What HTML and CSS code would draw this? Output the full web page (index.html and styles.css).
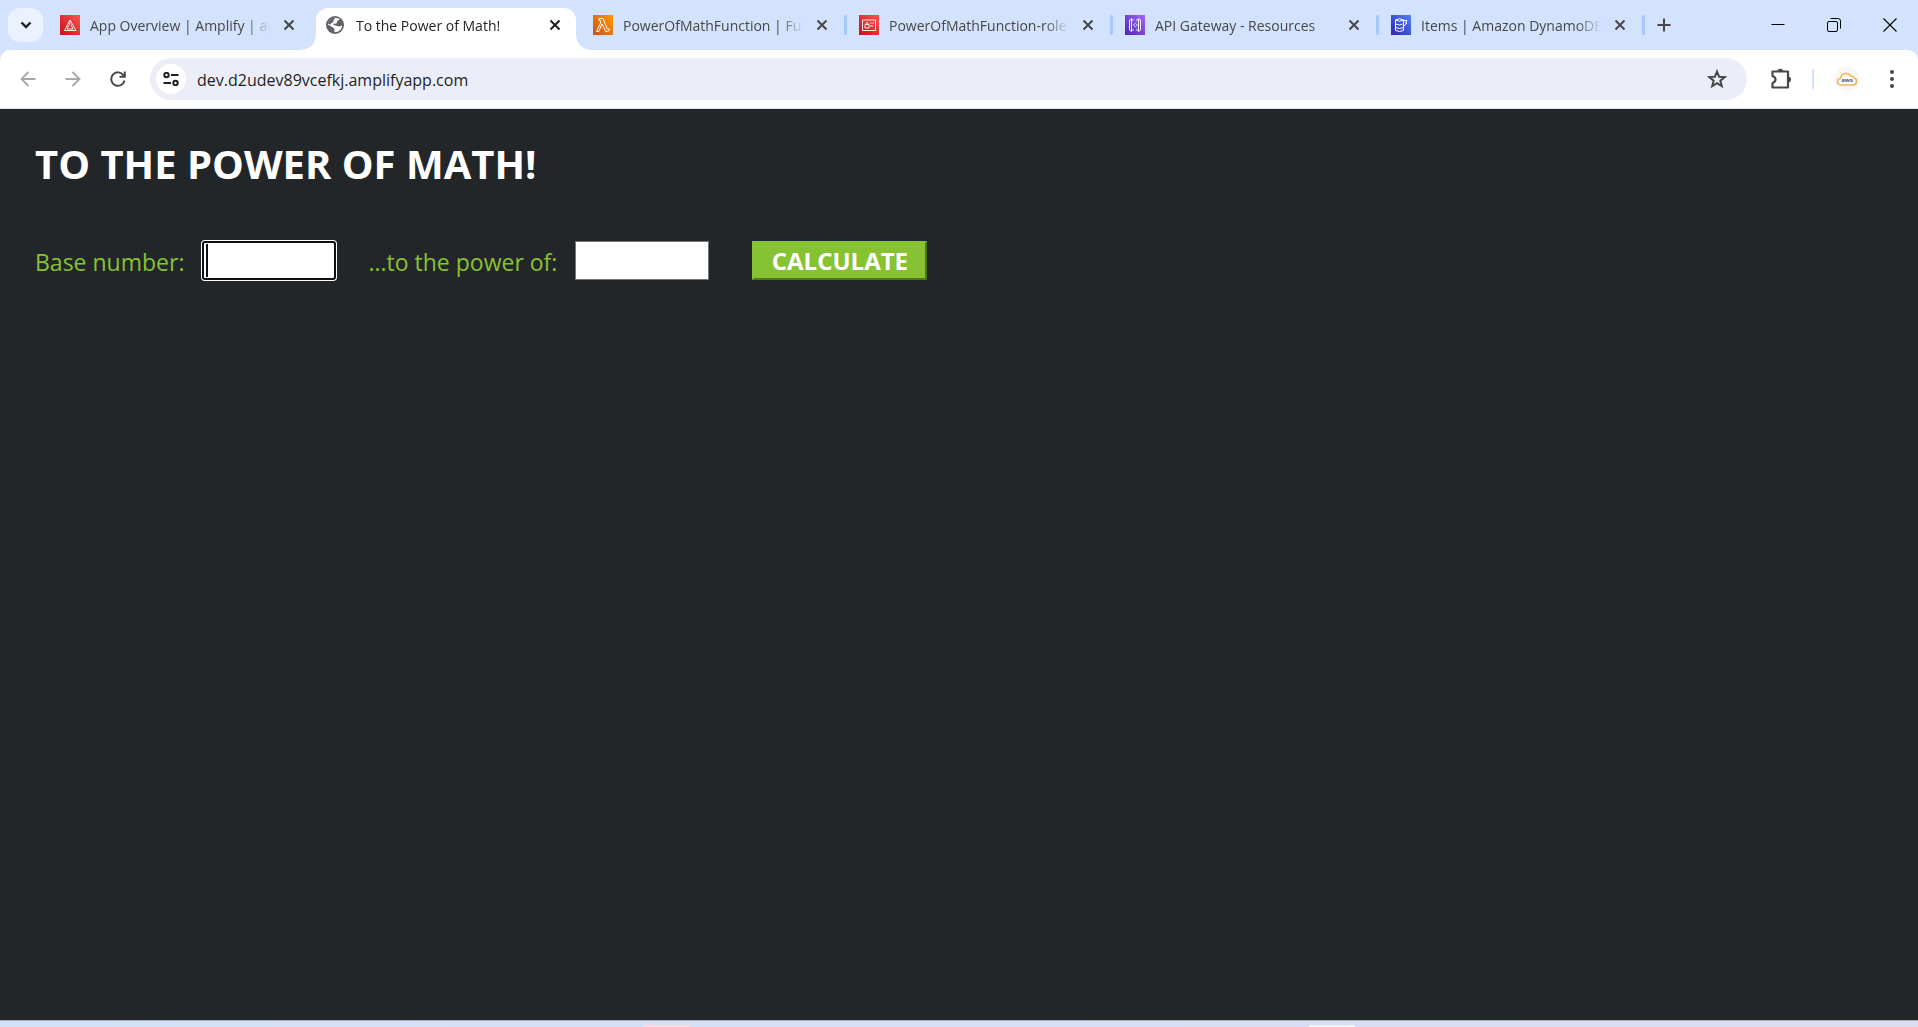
FILE: index.html
```html
<!DOCTYPE html>
<html lang="en">
<head>
<meta charset="utf-8">
<title>To the Power of Math!</title>
<link rel="stylesheet" href="styles.css">
</head>
<body>
<header class="browser">
  <div class="tabstrip">
    <button class="tab-search" aria-label="Search tabs"><svg width="12" height="8" viewBox="0 0 12 8"><path d="M1.500 1.500 6 6l4.500-4.500" fill="none" stroke="#1f1f1f" stroke-width="2.400"/></svg></button>
    <nav class="tabs">
      <div class="tab">
        <svg class="favicon" viewBox="0 0 20 20"><defs><linearGradient id="red" x1="0" y1="1" x2="1" y2="0"><stop stop-color="#c4101c"/><stop offset="1" stop-color="#ff5252"/></linearGradient></defs><rect width="20" height="20" fill="url(#red)"/><path d="M10 5 4.500 15.500H16zM10 8l-3 6h6l-2-4.500M10 5v3" fill="none" stroke="#fff" stroke-width=".9"/></svg>
        <a class="tab-title" href="#">App Overview | Amplify | app</a>
        <button class="tab-close" aria-label="Close tab"><svg width="12" height="12" viewBox="0 0 12 12"><path d="m1.500 1.500 9 9m0-9-9 9"/></svg></button>
      </div>
      <div class="tab tab-active">
        <svg class="favicon" viewBox="0 0 20 20"><circle cx="9" cy="10" r="9" fill="#5f6368"/><path d="M9 2.800c2 .2 4 .4 4.600 1.200-.3 1.500-1.800 1.500-2.600 2.300-.5.7.5 1.700-.6 2.200-.8.400-2.200-.2-3 .5-.4.600.3 1.200 1.200 1.300 1.800.1 2.600.8 3.600 1.100 1.300.2 2.400-.8 3.900-.7-.2 3.500-3.300 6.500-7.100 6.500l-.9-1.500c.6-1 .3-2.200-.8-2.900C5.500 12 3.600 10 1.900 9.800 2.200 5.500 5.500 3 9 2.800z" fill="#fff"/><path d="M9 2.800C5.500 3 2.500 5.500 1.900 8.600l2.400 1.200c.6-2 1.300-2.200 2.500-2.600 1-.4.200-2 1.400-2.700z" fill="#5f6368"/></svg>
        <a class="tab-title" href="#">To the Power of Math!</a>
        <button class="tab-close" aria-label="Close tab"><svg width="12" height="12" viewBox="0 0 12 12"><path d="m1.500 1.500 9 9m0-9-9 9"/></svg></button>
      </div>
      <div class="tab">
        <svg class="favicon" viewBox="0 0 20 20"><defs><linearGradient id="orange" x1="0" y1="1" x2="1" y2="0"><stop stop-color="#c8511b"/><stop offset="1" stop-color="#ff9900"/></linearGradient></defs><rect width="20" height="20" fill="url(#orange)"/><path d="M6 3.500h4L14.300 14l1.500-.5.700 2-3.700 1.200L9 9 5.800 16.500H3.500L8 7l-.6-1.500H6z" fill="none" stroke="#fff"/></svg>
        <a class="tab-title" href="#">PowerOfMathFunction | Functions</a>
        <button class="tab-close" aria-label="Close tab"><svg width="12" height="12" viewBox="0 0 12 12"><path d="m1.500 1.500 9 9m0-9-9 9"/></svg></button>
      </div>
      <div class="tab tab-divided">
        <svg class="favicon" viewBox="0 0 20 20"><rect width="20" height="20" fill="url(#red)"/><path d="M3.500 5h13v10.500h-13zM11 8h1.500m1 0H15m-4 3h3M6 9.500h4V13H6zm1-.5V8q1-1.500 2 0v1" fill="none" stroke="#fff" stroke-width=".9"/></svg>
        <a class="tab-title" href="#">PowerOfMathFunction-role-1</a>
        <button class="tab-close" aria-label="Close tab"><svg width="12" height="12" viewBox="0 0 12 12"><path d="m1.500 1.500 9 9m0-9-9 9"/></svg></button>
      </div>
      <div class="tab tab-divided">
        <svg class="favicon" viewBox="0 0 20 20"><defs><linearGradient id="purple" x1="0" y1="1" x2="1" y2="0"><stop stop-color="#4d27a8"/><stop offset="1" stop-color="#a166ff"/></linearGradient></defs><rect width="20" height="20" fill="url(#purple)"/><path d="m6.500 3.500-2 1.500v10l2 1.500zM13.500 3.500l2 1.500v10l-2 1.500zM6.500 5H9m-2.500 10H9m2-10h2.500M11 15h2.500M11 7.500 8.500 10l2.500 2.500M12 9v2" fill="none" stroke="#fff" stroke-width=".9"/></svg>
        <a class="tab-title" href="#">API Gateway - Resources</a>
        <button class="tab-close" aria-label="Close tab"><svg width="12" height="12" viewBox="0 0 12 12"><path d="m1.500 1.500 9 9m0-9-9 9"/></svg></button>
      </div>
      <div class="tab tab-divided">
        <svg class="favicon" viewBox="0 0 20 20"><defs><linearGradient id="blue" x1="0" y1="1" x2="1" y2="0"><stop stop-color="#2e27ad"/><stop offset="1" stop-color="#527fff"/></linearGradient></defs><rect width="20" height="20" fill="url(#blue)"/><path d="M4.500 5q4-2.500 8 0v10.500q-4 2-8 0zM4.500 5q4 2.500 8 0m-8 4q4 2 7 0m-7 3.500q4 2 8 0M13 5.500h3L14.500 8H16l-3.500 3.500" fill="none" stroke="#fff"/></svg>
        <a class="tab-title" href="#">Items | Amazon DynamoDB</a>
        <button class="tab-close" aria-label="Close tab"><svg width="12" height="12" viewBox="0 0 12 12"><path d="m1.500 1.500 9 9m0-9-9 9"/></svg></button>
      </div>
      <button class="new-tab" aria-label="New tab"><svg width="14" height="14" viewBox="0 0 14 14"><path d="M7 .5v13M.5 7h13" stroke="#474747" stroke-width="2"/></svg></button>
    </nav>
    <div class="window-controls">
      <button aria-label="Minimize"><svg width="14" height="14" viewBox="0 0 14 14"><path d="M.5 6.500h13" stroke="#000"/></svg></button>
      <button aria-label="Restore"><svg width="14" height="14" viewBox="0 0 14 14"><g fill="none" stroke="#000"><rect x=".5" y="3.500" width="10" height="10" rx="1.500"/><path d="M3.500.5h7.500q2.500 0 2.500 2.500v7.500"/></g></svg></button>
      <button aria-label="Close window"><svg width="14" height="14" viewBox="0 0 14 14"><path d="m.5.500 13 13m0-13-13 13" stroke="#000" stroke-width="1.100"/></svg></button>
    </div>
  </div>
  <div class="toolbar">
    <div class="nav-buttons">
      <button aria-label="Back"><svg width="16" height="16" viewBox="0 0 16 16"><path d="M15.500 8H2m6.500-7L1.500 8l7 7" fill="none" stroke="#a8a8a8" stroke-width="1.800"/></svg></button>
      <button aria-label="Forward"><svg width="16" height="16" viewBox="0 0 16 16"><path d="M.5 8H14M7.500 1l7 7-7 7" fill="none" stroke="#a8a8a8" stroke-width="1.800"/></svg></button>
      <button aria-label="Reload"><svg width="16" height="16" viewBox="0 0 16 16"><path d="M14.500 9.500A6.700 6.700 0 1 1 13.500 4.300L14.500 5.500M9.500 5.800h5.300V.5" fill="none" stroke="#474747" stroke-width="2"/></svg></button>
    </div>
    <div class="omnibox">
      <button class="site-info" aria-label="Site information"><svg width="16" height="14" viewBox="0 0 16 14"><g fill="none" stroke="#1f1f1f" stroke-width="2"><circle cx="3.500" cy="3" r="2.200"/><path d="M8 3h7.500M.5 11H8"/><circle cx="12.500" cy="11" r="2.200"/></g></svg></button>
      <input class="address" type="text" aria-label="Address" value="dev.d2udev89vcefkj.amplifyapp.com">
      <button class="bookmark" aria-label="Bookmark this page"><svg width="20" height="20" viewBox="0 0 20 20"><path d="m10 2.500 2.100 5.200 5.600.4-4.300 3.600 1.400 5.500-4.800-3-4.800 3 1.400-5.500-4.300-3.600 5.600-.4z" fill="none" stroke="#474747" stroke-width="2"/></svg></button>
    </div>
    <div class="tools">
      <button aria-label="Extensions"><svg width="22" height="22" viewBox="0 0 22 22"><path d="M2.500 3.500h15.500v16H2.500V15q3-1 3-3.500t-3-3.500z" fill="none" stroke="#474747" stroke-width="2.200" stroke-linejoin="round"/><path d="M7.500 3.500a2.800 2.800 0 0 1 5.600 0M18 8.500a3 3 0 0 1 0 6" fill="#474747"/></svg></button>
      <span class="tools-divider"></span>
      <button aria-label="Profile"><svg width="26" height="26" viewBox="0 0 26 26"><circle cx="13" cy="13" r="12.500" fill="#f7f7f7"/><path d="M7 19q-3.500-.5-3.500-3.500 0-2.500 3-3 .5-4.500 5-5 4-.3 5.500 3 2-1 3 1.500 2.500.5 2.500 3.500T19.500 19z" fill="#fff" stroke="#f6b25a" stroke-width="1.500"/><text x="13" y="16" class="avatar-text">aws</text></svg></button>
      <button class="menu" aria-label="Menu"><svg width="6" height="20" viewBox="0 0 6 20"><g fill="#474747"><circle cx="3" cy="3" r="2"/><circle cx="3" cy="10" r="2"/><circle cx="3" cy="17" r="2"/></g></svg></button>
    </div>
  </div>
</header>
<main class="page">
  <h1>TO THE POWER OF MATH!</h1>
  <form class="power-form">
    <div class="field">
      <label for="base">Base number:</label>
      <input class="number number-focused" id="base" type="text">
    </div>
    <div class="field">
      <label for="exponent">...to the power of:</label>
      <input class="number" id="exponent" type="text">
    </div>
    <button class="calculate" type="button">CALCULATE</button>
  </form>
</main>
<footer class="taskbar"><span class="task task-pink"></span><span class="task task-white"></span></footer>
</body>
</html>
```
FILE: styles.css
```css
* { box-sizing: border-box; }

body {
  margin: 0;
  min-height: 100vh;
  display: flex;
  flex-direction: column;
  overflow: hidden;
  font-family: "Open Sans", "Noto Sans", sans-serif;
  background: #232629;
}

button {
  padding: 0;
  border: 0;
  background: none;
  font: inherit;
  display: flex;
  align-items: center;
  justify-content: center;
}

svg { display: block; }

.browser { background: #d3e2fd; }

.tabstrip {
  height: 50px;
  display: flex;
  padding-left: 8px;
}

.tab-search {
  width: 35px;
  height: 34px;
  margin-top: 8px;
  border-radius: 12px;
  background: #ebf1fe;
}

.tabs {
  flex: 1;
  display: flex;
  min-width: 0;
  padding-left: 7px;
}

.tab {
  position: relative;
  flex: 0 1 260px;
  min-width: 0;
  height: 42px;
  margin: 8px 6px 0 0;
  padding: 0 11px 8px 10px;
  display: flex;
  align-items: center;
}

.tab-active {
  margin-right: 7px;
  background: #fff;
  border-radius: 12px 12px 0 0;
}

.tab-active::before,
.tab-active::after {
  content: "";
  position: absolute;
  bottom: 0;
  width: 14px;
  height: 14px;
}

.tab-active::before {
  right: 100%;
  background: radial-gradient(circle at 0 0, transparent 13px, #fff 14px);
}

.tab-active::after {
  left: 100%;
  background: radial-gradient(circle at 100% 0, transparent 13px, #fff 14px);
}

.tab-divided::before,
.new-tab::before {
  content: "";
  position: absolute;
  left: -5px;
  top: 7px;
  width: 3px;
  height: 20px;
  border-radius: 2px;
  background: #a8c7fa;
}

.favicon {
  flex: none;
  width: 20px;
  height: 20px;
}

.tab-title {
  flex: 1;
  min-width: 0;
  margin: 0 9px 0 10px;
  padding-top: 2px;
  overflow: hidden;
  white-space: nowrap;
  font-size: 14px;
  line-height: 20px;
  color: #474747;
  text-decoration: none;
  mask-image: linear-gradient(to left, transparent, #000 24px);
}

.tab-active .tab-title { color: #1f1f1f; }

.tab-close { width: 20px; height: 20px; }

.tab-close path {
  stroke: #474747;
  stroke-width: 2;
}

.tab-active .tab-close path { stroke: #1f1f1f; }

.new-tab {
  position: relative;
  width: 34px;
  height: 34px;
  margin-top: 8px;
}

.window-controls {
  display: flex;
  height: 50px;
}

.window-controls button { width: 56px; }

.toolbar {
  height: 59px;
  display: flex;
  align-items: center;
  background: #fff;
  border-bottom: 1px solid #dde3ea;
  border-radius: 10px 10px 0 0;
}

.nav-buttons {
  display: flex;
  padding: 0 10px 0 5px;
}

.nav-buttons button { width: 45px; height: 40px; }

.omnibox {
  flex: 1;
  height: 42px;
  display: flex;
  align-items: center;
  padding: 0 20px 0 6px;
  border-radius: 21px;
  background: #ebeef8;
}

.site-info {
  width: 30px;
  height: 30px;
  border-radius: 50%;
  background: #fff;
}

.address {
  flex: 1;
  padding: 2px 0 0;
  margin-left: 11px;
  border: 0;
  background: none;
  font: 16px/24px "Open Sans", "Noto Sans", sans-serif;
  color: #1f1f1f;
}

.tools {
  display: flex;
  align-items: center;
  gap: 20px;
  padding: 0 23px;
}

.tools-divider {
  width: 2px;
  height: 20px;
  background: #d3e2fd;
}

.menu { margin-left: 9px; }

.avatar-text {
  font-size: 6px;
  font-weight: 700;
  fill: #4b5563;
  text-anchor: middle;
}

.page {
  flex: 1;
  padding: 27px 35px;
  color: #87c232;
}

h1 {
  margin: 0;
  font-size: 40px;
  line-height: 56px;
  color: #fff;
}

.power-form {
  display: flex;
  align-items: center;
  margin-top: 49px;
  font-size: 23px;
}

.field {
  display: flex;
  align-items: center;
  gap: 18px;
  margin-right: 32px;
}

.field label { padding-top: 2px; }

.field + .calculate { margin-left: 11px; }

.number {
  width: 134px;
  height: 39px;
  padding: 2px;
  border: 1px solid #767676;
  background: #fff;
  font: inherit;
}

.number-focused {
  border: 2px solid #101010;
  border-radius: 3px;
  box-shadow: 0 0 0 1px #fff;
  background: linear-gradient(#101010, #101010) 2px center / 2px 33px no-repeat #fff;
}

.calculate {
  width: 175px;
  height: 39px;
  border: 2px solid;
  border-color: #87c232 #4f741c #4f741c #87c232;
  background: #87c232;
  color: #fff;
  font-size: 24px;
  font-weight: 700;
}

.taskbar {
  height: 7px;
  display: flex;
  justify-content: space-between;
  align-items: flex-end;
  padding: 0 563px 0 643px;
  border-top: 1px solid #a9b1bd;
  background: linear-gradient(to right, #d3e2f8, #d6def5 50%, #dcdcf0);
}

.task {
  width: 46px;
  height: 2px;
  border-radius: 4px 4px 0 0;
}

.task-pink { background: #fbdde6; }
.task-white { background: #f0f4fb; }
```
